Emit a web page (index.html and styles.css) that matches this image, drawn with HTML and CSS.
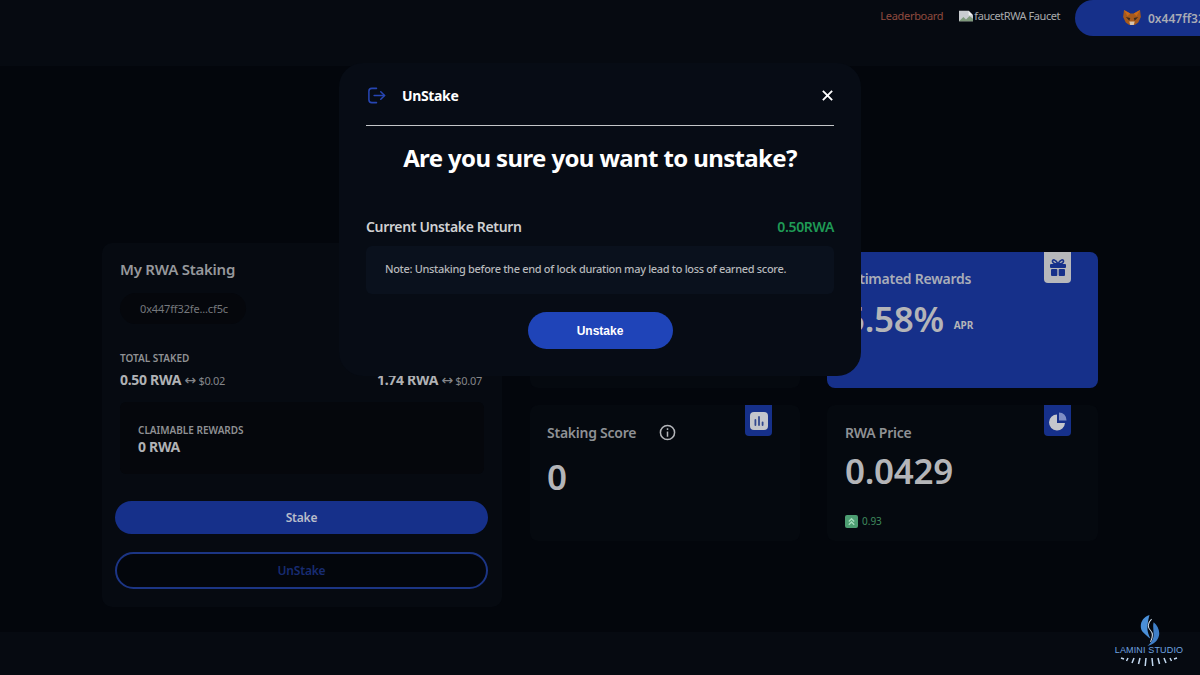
FILE: index.html
```html
<!DOCTYPE html>
<html lang="en">

<head>
    <meta charset="UTF-8">
    <meta name="viewport" content="width=device-width, initial-scale=1.0">
    <title>RWA Staking</title>
    <link rel="stylesheet" href="styles.css">
</head>

<body>
    <header class="topbar">
        <a class="nav-link nav-red" href="#">Leaderboard</a>
        <a class="nav-link" href="#">
            <svg class="broken-img" viewBox="0 0 16 16">
                <path d="M0 2h11l5 5v7H0z" fill="#c9ccd0" />
                <path d="M0 14l5-5 3 3 4-4 4 3v3z" fill="#7f9a7c" />
                <path d="M11 2l5 5h-5z" fill="#f2f2f2" />
            </svg>faucetRWA Faucet
        </a>
        <button class="wallet-btn">
            <svg class="fox" viewBox="0 0 20 18">
                <polygon points="1,0 8,4 12,4 19,0 20,8 17,14 13,17 7,17 3,14 0,8" fill="#a85a1c" />
                <polygon points="3,8 8,9 7,12" fill="#3a2a1c" />
                <polygon points="17,8 12,9 13,12" fill="#3a2a1c" />
                <polygon points="7,13 13,13 12,17 8,17" fill="#d8c4ac" />
                <polygon points="1,0 8,4 5,7" fill="#c96a1b" />
                <polygon points="19,0 12,4 15,7" fill="#c96a1b" />
            </svg>
            <span>0x447ff32fe...cf5c</span>
        </button>
    </header>

    <main class="dashboard">
        <section class="staking-card">
            <h2 class="card-title">My RWA Staking</h2>
            <div class="address-pill">0x447ff32fe...cf5c</div>
            <div class="totals">
                <div>
                    <div class="small-label">TOTAL STAKED</div>
                    <div class="amount">0.50 RWA <span class="swap"><span class="swap-arrow">↔</span> $0.02</span></div>
                </div>
                <div>
                    <div class="amount">1.74 RWA <span class="swap"><span class="swap-arrow">↔</span> $0.07</span></div>
                </div>
            </div>
            <div class="claim-box">
                <div class="small-label">CLAIMABLE REWARDS</div>
                <div class="amount">0 RWA</div>
            </div>
            <button class="btn-stake">Stake</button>
            <button class="btn-unstake">UnStake</button>
        </section>

        <section class="stats">
            <div class="stat-card"></div>
            <div class="stat-card stat-blue">
                <span class="stat-icon icon-light">
                    <svg viewBox="0 0 20 20" fill="#16308a">
                        <rect x="2" y="6" width="16" height="4" rx="1" />
                        <rect x="3" y="11" width="6.3" height="7" rx="1" />
                        <rect x="10.7" y="11" width="6.3" height="7" rx="1" />
                        <path d="M10 6C8 1 4 1 4.5 3.5 5 6 8 6 10 6c2 0 5 0 5.500-2.500C16 1 12 1 10 6z" fill="none" stroke="#16308a" stroke-width="1.600" />
                    </svg>
                </span>
                <h3 class="stat-title">Estimated Rewards</h3>
                <div class="stat-value">5.58% <span class="apr">APR</span></div>
            </div>
            <div class="stat-card">
                <span class="stat-icon">
                    <svg viewBox="0 0 20 20">
                        <rect x="1" y="1" width="18" height="18" rx="4" fill="#c4c6cc" />
                        <rect x="5.500" y="8" width="1.800" height="7" rx=".9" fill="#33498f" />
                        <rect x="9.100" y="5" width="1.800" height="10" rx=".9" fill="#33498f" />
                        <rect x="12.700" y="10.500" width="1.800" height="4.500" rx=".9" fill="#33498f" />
                    </svg>
                </span>
                <h3 class="stat-title">Staking Score
                    <svg class="info" viewBox="0 0 18 18" fill="none" stroke="#b4b6ba" stroke-width="1.600">
                        <circle cx="9" cy="9" r="7.500" />
                        <path d="M9 8v5.500" />
                        <path d="M9 4.500v1.800" />
                    </svg>
                </h3>
                <div class="stat-value score-value">0</div>
            </div>
            <div class="stat-card">
                <span class="stat-icon">
                    <svg viewBox="0 0 20 20">
                        <path d="M9 3.500a8 8 0 1 0 8 8.500H9z" fill="#c4c6cc" />
                        <path d="M11 1.500a7.500 7.500 0 0 1 7.500 8H11z" fill="#7e8dc4" />
                    </svg>
                </span>
                <h3 class="stat-title">RWA Price</h3>
                <div class="stat-value">0.0429</div>
                <div class="change">
                    <span class="change-badge">
                        <svg viewBox="0 0 12 12" fill="none" stroke="#a5dcbc" stroke-width="1.300">
                            <path d="M3.500 6 6 3.500 8.500 6" />
                            <path d="M3.500 9 6 6.500 8.500 9" />
                        </svg>
                    </span>
                    0.93
                </div>
            </div>
        </section>
    </main>

    <div class="footer-strip"></div>

    <!-- unstake confirm dialog -->
    <div class="modal">
        <div class="modal-head">
            <svg class="modal-icon" viewBox="0 0 20 20" fill="none" stroke="#2746b4" stroke-width="1.600" stroke-linecap="round" stroke-linejoin="round">
                <path d="M10 2.500H5a3 3 0 0 0-3 3v9a3 3 0 0 0 3 3h5" />
                <path d="M7.500 10H18.500" />
                <path d="M14.500 6l4 4-4 4" />
            </svg>
            <span class="modal-title">UnStake</span>
            <svg class="modal-close" viewBox="0 0 14 14" fill="none" stroke="#fff" stroke-width="2">
                <path d="M2 2l10 10M12 2 2 12" />
            </svg>
        </div>
        <h1 class="modal-question">Are you sure you want to unstake?</h1>
        <div class="return-row">
            <span>Current Unstake Return</span>
            <span class="return-value">0.50RWA</span>
        </div>
        <p class="note">Note: Unstaking before the end of lock duration may lead to loss of earned score.</p>
        <button class="modal-btn">Unstake</button>
    </div>

    <div class="studio-logo">
        <svg viewBox="0 0 20 30" class="studio-mark">
            <path d="M10 0C2 2-1 12 4 17c2 2 4 4 7 6-2-4-3-7-3-10 0-5 1-9 2-13z" fill="#4a8fd8" />
            <path d="M14 7c5 4 7 11 4 16-2 4-6 6-10 7 3-3 6-6 6-11 0-4-1-8 0-12z" fill="#3f7fc8" />
            <path d="M12 4C8 8 8 12 11 15c3 3 2 7 0 11" fill="none" stroke="#d5e4f4" stroke-width="1" />
        </svg>
        <div class="studio-name">LAMINI STUDIO</div>
        <svg viewBox="0 0 58 10" class="studio-rays" stroke="#c3d9f0" stroke-width="1.500">
            <path d="M1 1 4 2M8 1 6.500 4M14 1l-2 5M20 1l-1.500 6M26 1l-.8 8M32 1l.8 8M38 1l1.500 6M44 1l2 5M50 1l1.500 3M57 1l-3 1" />
        </svg>
    </div>
</body>

</html>
```

FILE: styles.css
```css
body {
    font-family: "Noto Sans", "Open Sans", sans-serif;
    margin: 0;
    width: 1200px;
    height: 675px;
    overflow: hidden;
    position: relative;
    background-color: #03060c;
    color: #a8a9ab;
}

button {
    font-family: inherit;
    border: none;
}

h1,
h2,
h3,
p {
    margin: 0;
}

.topbar {
    height: 66px;
    box-sizing: border-box;
    display: flex;
    justify-content: flex-end;
    align-items: flex-start;
    gap: 15px;
    margin-right: -40px;
    background-color: #060a11;
}

.nav-link {
    display: flex;
    align-items: center;
    height: 31px;
    color: #a9abad;
    font-size: 11px;
    letter-spacing: -0.45px;
    text-decoration: none;
}

.nav-red {
    color: #8f4a3f;
    letter-spacing: -0.3px;
}

.broken-img {
    width: 16px;
    height: 14px;
}

.wallet-btn {
    width: 165px;
    height: 36px;
    padding-left: 48px;
    display: flex;
    align-items: center;
    gap: 7px;
    background-color: #16308a;
    border-radius: 24px 0 0 24px;
    color: #a9abb5;
    font-size: 12px;
    font-weight: 600;
    white-space: nowrap;
}

.fox {
    width: 18px;
    height: 16px;
    flex: none;
}

.dashboard {
    padding: 177px 0 0 102px;
    display: flex;
    align-items: flex-start;
    gap: 28px;
}

.staking-card {
    width: 400px;
    height: 364px;
    box-sizing: border-box;
    padding: 15px 13px 0;
    background-color: #060a11;
    border-radius: 10px;
}

.card-title {
    margin-left: 5px;
    font-size: 15px;
    line-height: 22px;
    font-weight: 600;
    letter-spacing: -0.25px;
    color: #96989c;
}

.address-pill {
    width: 126px;
    height: 31px;
    margin: 13px 0 0 5px;
    box-sizing: border-box;
    padding-left: 20px;
    line-height: 31px;
    border-radius: 16px;
    background-color: #05070c;
    font-size: 11px;
    letter-spacing: -0.15px;
    color: #75787d;
}

.totals {
    margin: 27px 0 0 5px;
    padding-right: 7px;
    display: flex;
    justify-content: space-between;
    align-items: flex-end;
}

.small-label {
    font-size: 10px;
    line-height: 14px;
    font-weight: 600;
    color: #8f9194;
}

.amount {
    margin-top: 6px;
    font-size: 14px;
    line-height: 17px;
    font-weight: 700;
    letter-spacing: -0.3px;
    color: #b0b2b5;
}

.swap {
    font-size: 11px;
    font-weight: 400;
    color: #84868a;
}

.swap-arrow {
    font-family: "DejaVu Sans", sans-serif;
    font-size: 14px;
    line-height: 14px;
}

.claim-box {
    margin: 13px 5px 0;
    height: 72px;
    box-sizing: border-box;
    padding: 21px 18px 0;
    background-color: #05070c;
    border-radius: 6px;
}

.claim-box .amount {
    margin-top: 1px;
}

.btn-stake,
.btn-unstake {
    display: block;
    width: 373px;
    border-radius: 20px;
    font-size: 12px;
    font-weight: 600;
    letter-spacing: -0.2px;
}

.btn-stake {
    height: 33px;
    margin-top: 27px;
    background-color: #16308a;
    color: #b9bdca;
}

.btn-unstake {
    height: 37px;
    margin-top: 18px;
    background-color: #03060c;
    border: 2px solid #1c3585;
    color: #182c72;
}

.stats {
    width: 568px;
    margin-top: 9px;
    display: grid;
    grid-template-columns: 270px 271px;
    grid-auto-rows: 136px;
    gap: 17px 27px;
}

.stat-card {
    position: relative;
    box-sizing: border-box;
    padding: 16px 17px 0;
    background-color: #05090f;
    border-radius: 8px;
}

.stat-card:nth-child(even) {
    padding-left: 18px;
}

.stat-blue {
    padding-top: 15px;
    background-color: #16308a;
}

.stat-title {
    display: flex;
    align-items: center;
    gap: 23px;
    height: 22px;
    font-size: 14px;
    font-weight: 600;
    letter-spacing: -0.25px;
    color: #8f9195;
}

.stat-blue .stat-title {
    color: #a9adb9;
}

.stat-value {
    margin-top: 5px;
    font-size: 35px;
    line-height: 46px;
    font-weight: 600;
    letter-spacing: -0.3px;
    color: #b4b5b8;
}

.stat-blue .stat-value {
    margin-top: 7px;
}

.score-value {
    margin-top: 11px;
}

.apr {
    margin-left: 1px;
    font-size: 10px;
    font-weight: 700;
    letter-spacing: 0;
    vertical-align: 3px;
}

.stat-icon {
    position: absolute;
    top: 0;
    right: 28px;
    width: 27px;
    height: 31px;
    display: flex;
    align-items: center;
    justify-content: center;
    background-color: #16308a;
    border-radius: 0 0 4px 4px;
}

.stat-card:nth-child(even) .stat-icon {
    right: 27px;
}

.stat-icon svg {
    width: 20px;
    height: 20px;
}

.icon-light {
    background-color: #b7b8bb;
}

.info {
    width: 17px;
    height: 17px;
}

.change {
    margin-top: 20px;
    display: flex;
    align-items: center;
    gap: 4px;
    font-size: 10px;
    color: #3f8a5d;
}

.change-badge {
    width: 13px;
    height: 13px;
    display: flex;
    background-color: #4d9e72;
    border-radius: 2px;
}

.footer-strip {
    position: absolute;
    left: 0;
    right: 0;
    top: 632px;
    bottom: 0;
    background-color: #060a11;
}

.modal {
    position: absolute;
    left: 339px;
    top: 63px;
    width: 522px;
    height: 313px;
    box-sizing: border-box;
    padding: 0 27px;
    background-color: #070c15;
    border-radius: 24px;
}

.modal-head {
    height: 63px;
    box-sizing: border-box;
    padding-top: 2px;
    display: flex;
    align-items: center;
    gap: 16px;
    border-bottom: 1px solid #c4c6c9;
}

.modal-icon {
    width: 19px;
    height: 19px;
    margin-left: 1px;
}

.modal-title {
    flex: 1;
    font-size: 14px;
    font-weight: 700;
    letter-spacing: -0.35px;
    color: #fff;
}

.modal-close {
    width: 13px;
    height: 13px;
}

.modal-question {
    margin-top: 14px;
    text-align: center;
    font-size: 24px;
    line-height: 36px;
    font-weight: 700;
    letter-spacing: -0.63px;
    color: #fff;
}

.return-row {
    margin-top: 41px;
    display: flex;
    justify-content: space-between;
    font-size: 14px;
    line-height: 20px;
    font-weight: 600;
    letter-spacing: -0.35px;
    color: #cfd0d2;
}

.return-value {
    color: #1f9a55;
}

.note {
    margin-top: 9px;
    height: 48px;
    box-sizing: border-box;
    padding: 0 19px;
    line-height: 46px;
    font-size: 11px;
    font-weight: 500;
    letter-spacing: -0.32px;
    background-color: #0a111d;
    border-radius: 6px;
    color: #b6b8bb;
}

.modal-btn {
    display: block;
    width: 145px;
    height: 37px;
    margin: 18px auto 0;
    background-color: #1f44b8;
    border-radius: 19px;
    font-family: "Liberation Sans", sans-serif;
    font-size: 12px;
    font-weight: 700;
    color: #fff;
}

.studio-logo {
    position: absolute;
    right: 14px;
    bottom: 8px;
    width: 74px;
    display: flex;
    flex-direction: column;
    align-items: center;
}

.studio-mark {
    width: 21px;
    height: 31px;
}

.studio-name {
    margin-top: -1px;
    font-family: "Liberation Sans", sans-serif;
    font-size: 9px;
    line-height: 11px;
    letter-spacing: 0.15px;
    white-space: nowrap;
    color: #6ea4e0;
}

.studio-rays {
    width: 58px;
    height: 10px;
    margin-top: 1px;
}
```
